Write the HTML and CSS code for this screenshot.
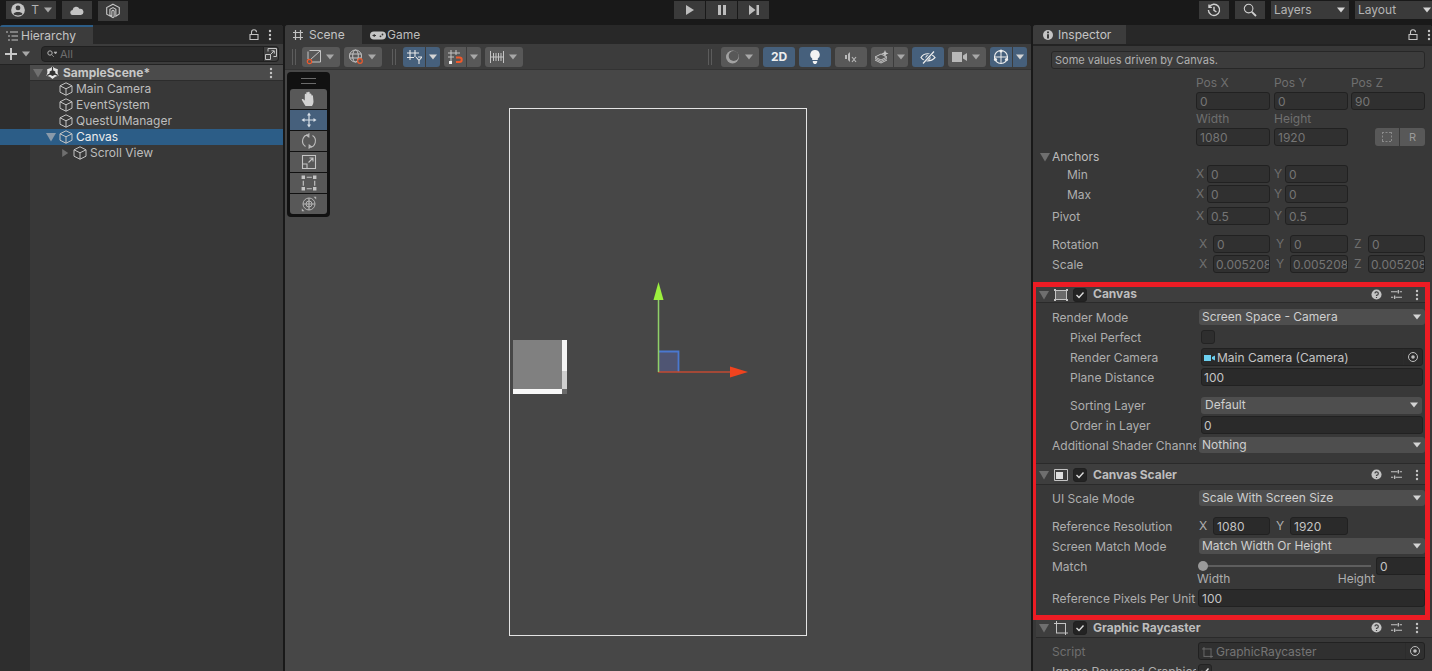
FILE: index.html
```html
<!DOCTYPE html>
<html lang="en">
<head>
<meta charset="utf-8">
<title>Unity Editor</title>
<link rel="stylesheet" href="styles.css">
</head>
<body>
<svg class="defs" width="0" height="0" aria-hidden="true">
  <symbol id="cube" viewBox="0 0 14 14"><path d="M7 .8 13 3.8V10.2L7 13.2 1 10.2V3.8ZM1 3.8 7 6.8 13 3.8M7 6.8V13.2" fill="none" stroke="currentColor" stroke-width="1"/></symbol>
  <symbol id="caret" viewBox="0 0 8 6"><path d="M0 .5H8L4 5.5Z" fill="currentColor"/></symbol>
  <symbol id="fold" viewBox="0 0 10 10"><path d="M0 1H10L5 9.5Z" fill="currentColor"/></symbol>
  <symbol id="dots" viewBox="0 0 4 12"><circle cx="2" cy="2" r="1.2" fill="currentColor"/><circle cx="2" cy="6" r="1.2" fill="currentColor"/><circle cx="2" cy="10" r="1.2" fill="currentColor"/></symbol>
  <symbol id="lock" viewBox="0 0 10 12"><path d="M2.5 5V3.2A2.5 2.5 0 0 1 7.5 3.2M1 5.5H9V10.5H1Z" fill="none" stroke="currentColor" stroke-width="1.1"/></symbol>
  <symbol id="help" viewBox="0 0 12 12"><circle cx="6" cy="6" r="5.5" fill="currentColor"/><path d="M4.2 4.8A1.9 1.9 0 1 1 6 7V7.6M6 8.6V9.8" fill="none" stroke="#3e3e3e" stroke-width="1.3"/></symbol>
  <symbol id="sliders" viewBox="0 0 12 12"><path d="M0 3H7M9.5 3H12M8 1V5M0 9H2.5M5 9H12M4 7V11" fill="none" stroke="currentColor" stroke-width="1.3"/></symbol>
  <symbol id="target" viewBox="0 0 12 12"><circle cx="6" cy="6" r="4.5" fill="none" stroke="currentColor"/><circle cx="6" cy="6" r="1.8" fill="currentColor"/></symbol>
  <symbol id="rect" viewBox="0 0 14 14"><path d="M5 2H9.500M5 12H9.500M2 5V9.500M12 5V9.500" fill="none" stroke="currentColor"/><path d="M.5 .5H3.500V3.500H.5ZM10.500 .5H13.500V3.500H10.500ZM.5 10.500H3.500V13.500H.5ZM10.500 10.500H13.500V13.500H10.500Z" fill="currentColor"/></symbol>
  <symbol id="ray" viewBox="0 0 14 14"><path d="M0 2.500H12M2 12H14M2.500 0V12M11.500 2V14" fill="none" stroke="currentColor"/></symbol>
</svg>

<header class="topbar">
  <div class="top-group">
    <div class="tb account">
      <svg class="i16" viewBox="0 0 14 14"><circle cx="7" cy="7" r="6" fill="#c4c4c4"/><circle cx="7" cy="5.2" r="2.1" fill="#3c3c3c"/><path d="M3 10.5C4 8.2 10 8.2 11 10.5 9.5 12.2 4.5 12.2 3 10.5Z" fill="#3c3c3c"/></svg>
      <span class="tb-text">T</span>
      <svg class="caret"><use href="#caret"/></svg>
    </div>
    <div class="tb cloud">
      <svg class="cloud-ico" viewBox="0 0 14 9"><path d="M3 9A2.5 2.5 0 0 1 2.6 4 3.6 3.6 0 0 1 9.4 2.8 3.1 3.1 0 0 1 11 9Z" fill="#c4c4c4"/></svg>
    </div>
    <div class="tb collab">
      <svg class="i16" viewBox="0 0 14 14"><path d="M7 1 12.5 4V9.5L9.500 11.500V5.500L7 4 4.300 5.500V10.500L6 11.500V7L7 6.300 8 7V12L7 12.800 1.500 9.800V4Z" fill="none" stroke="#c4c4c4"/></svg>
    </div>
  </div>
  <div class="play-group">
    <div class="pb"><svg viewBox="0 0 10 12" class="play-ico"><path d="M1 1 9 6 1 11Z" fill="#bdbdbd"/></svg></div>
    <div class="pb"><svg viewBox="0 0 10 12" class="play-ico"><path d="M1 1H4V11H1ZM6 1H9V11H6Z" fill="#bdbdbd"/></svg></div>
    <div class="pb"><svg viewBox="0 0 10 12" class="play-ico"><path d="M0 1 6.500 6 0 11ZM7.500 1H10V11H7.500Z" fill="#bdbdbd"/></svg></div>
  </div>
  <div class="top-group right">
    <div class="tb square">
      <svg class="i14" viewBox="0 0 14 14"><path d="M2.200 4A5.600 5.600 0 1 1 1.400 7M2 1.500V4.400H4.900M7 3.800V7.400L9.400 8.800" fill="none" stroke="#d0d0d0" stroke-width="1.400"/></svg>
    </div>
    <div class="tb square">
      <svg class="i14" viewBox="0 0 14 14"><circle cx="5.600" cy="5.600" r="4.300" fill="none" stroke="#d0d0d0" stroke-width="1.100"/><path d="M8.800 8.800 13 13" stroke="#d0d0d0" stroke-width="1.800"/></svg>
    </div>
    <div class="tb layers"><span>Layers</span><svg class="caret light"><use href="#caret"/></svg></div>
    <div class="tb layout"><span>Layout</span><svg class="caret light"><use href="#caret"/></svg></div>
  </div>
</header>

<main class="panels">
  <section class="panel hierarchy">
    <div class="tabbar">
      <div class="tab tab-hier accent">
        <svg class="i12" viewBox="0 0 12 12"><path d="M0 2H2M4 2H12M2 6H4M5.500 6H12M2 10H4M5.500 10H12" stroke="#c4c4c4" stroke-width="1"/></svg>
        <span>Hierarchy</span>
      </div>
      <div class="tab-actions">
        <svg class="lock"><use href="#lock"/></svg>
        <svg class="dots"><use href="#dots"/></svg>
      </div>
    </div>
    <div class="hier-tools">
      <span class="plus">
        <svg class="i12" viewBox="0 0 12 12"><path d="M6 0V12M0 6H12" stroke="#c8c8c8" stroke-width="2"/></svg>
        <svg class="caret plus-caret"><use href="#caret"/></svg>
      </span>
      <div class="search">
        <svg class="search-ico" viewBox="0 0 10 8"><circle cx="3" cy="3" r="2.200" fill="none" stroke="#b5b5b5"/><path d="M5 5 7 7M7 2H10L8.500 4Z" fill="#b5b5b5" stroke="#b5b5b5" stroke-width=".6"/></svg>
        <span class="search-text">All</span>
        <span class="search-btn">
          <svg class="i12" viewBox="0 0 12 12"><path d="M3 3.500V.5H11.500V8.500H8.500M.5 6.500H5.500V11.500H.5ZM5.500 6.500 9 3M6.500 2.800H9.300V5.600" fill="none" stroke="#c4c4c4"/></svg>
        </span>
      </div>
    </div>
    <div class="tree">
      <div class="tree-gutter"></div>
      <div class="tree-list">
        <div class="scene-row">
          <svg class="fold dim"><use href="#fold"/></svg>
          <svg class="unity-ico" viewBox="0 0 14 14"><path d="M7 0 9 2.200 12.800 3.500 12.500 7 13.500 10.500 10 11.500 7 14 4 11.500 .5 10.500 1.500 7 1.200 3.500 5 2.200Z" fill="#e6e6e6"/><path d="M7 4.200 10 5.900V9.200L7 10.900 4 9.200V5.900Z" fill="#333"/><path d="M7 .5V4.500M1.200 10.300 4.500 8.500M12.800 10.300 9.500 8.500" stroke="#333" stroke-width="1.300"/></svg>
          <span class="scene-name">SampleScene*</span>
          <svg class="dots scene-dots"><use href="#dots"/></svg>
        </div>
        <div class="tree-row lvl1"><svg class="cube"><use href="#cube"/></svg><span>Main Camera</span></div>
        <div class="tree-row lvl1"><svg class="cube"><use href="#cube"/></svg><span>EventSystem</span></div>
        <div class="tree-row lvl1"><svg class="cube"><use href="#cube"/></svg><span>QuestUIManager</span></div>
        <div class="tree-row lvl1 selected"><svg class="fold sel-fold"><use href="#fold"/></svg><svg class="cube"><use href="#cube"/></svg><span>Canvas</span></div>
        <div class="tree-row lvl2"><svg class="fold closed dim" viewBox="0 0 10 10"><path d="M1.500 0 9 5 1.500 10Z" fill="currentColor"/></svg><svg class="cube"><use href="#cube"/></svg><span>Scroll View</span></div>
      </div>
    </div>
  </section>

  <section class="panel scene">
    <div class="tabbar">
      <div class="tab tab-scene">
        <svg class="i12" viewBox="0 0 12 12"><path d="M3.500 1V11M8.500 1V11M1 3.500H11M1 8.500H11" fill="none" stroke="#c4c4c4" stroke-width="1.200"/></svg>
        <span>Scene</span>
      </div>
      <div class="tab-plain">
        <svg class="pad-ico" viewBox="0 0 16 9"><path d="M4 .5H12A3.800 3.800 0 0 1 12 8.500H4A3.800 3.800 0 0 1 4 .5Z" fill="#c4c4c4"/><path d="M2.500 4.500H6M4.200 3V6" stroke="#333"/><circle cx="10.500" cy="5.300" r=".9" fill="#333"/><circle cx="12.500" cy="3.500" r=".9" fill="#333"/></svg>
        <span>Game</span>
      </div>
    </div>
    <div class="scene-tools">
      <div class="grip"></div>
      <div class="sb w38">
        <svg class="i16" viewBox="0 0 16 16"><path d="M3.500 1.500H14.500V13H6M2 10V2.500M4 11 14 2" fill="none" stroke="#c4c4c4"/><circle cx="3.500" cy="12.500" r="2.200" fill="none" stroke="#f0592b" stroke-width="1.200"/></svg>
        <svg class="caret"><use href="#caret"/></svg>
      </div>
      <div class="sb w38">
        <svg class="i16" viewBox="0 0 16 16"><circle cx="7.500" cy="7" r="6" fill="none" stroke="#c4c4c4"/><ellipse cx="7.500" cy="7" rx="2.800" ry="6" fill="none" stroke="#c4c4c4"/><path d="M1.500 5H13.500M1.500 9H13.500" stroke="#c4c4c4"/><circle cx="12" cy="12" r="2.300" fill="#585858" stroke="#f0592b" stroke-width="1.200"/></svg>
        <svg class="caret"><use href="#caret"/></svg>
      </div>
      <div class="grip second"></div>
      <div class="split on">
        <span class="sp-main"><svg class="i16" viewBox="0 0 16 16"><path d="M4 1V11M9 1V8M1 4H13M1 8.500H8M12 8H16M10 8 13 11.500V15M16 8 13 11.500" fill="none" stroke="#e8e8e8" stroke-width="1.100"/></svg></span>
        <span class="sp-arrow"><svg class="caret"><use href="#caret"/></svg></span>
      </div>
      <div class="split">
        <span class="sp-main"><svg class="i16" viewBox="0 0 16 16"><path d="M4 1V12M9 1V6M1 4H13M1 8H7" fill="none" stroke="#c4c4c4"/><path d="M9 8.500H12.500A2 2 0 0 1 12.500 13H9" fill="none" stroke="#f0592b" stroke-width="2"/><path d="M2 12H5V15H2Z" fill="#eee"/></svg></span>
        <span class="sp-arrow"><svg class="caret"><use href="#caret"/></svg></span>
      </div>
      <div class="sb w38">
        <svg class="i16" viewBox="0 0 16 16"><path d="M1.500 2V14M14.500 2V14M1.500 8H14.500M4.500 4V12M7 4V12M9.500 4V12M12 4V12" fill="none" stroke="#c4c4c4"/></svg>
        <svg class="caret"><use href="#caret"/></svg>
      </div>
      <div class="spacer"></div>
      <div class="grip third"></div>
      <div class="sb w38">
        <svg class="i16" viewBox="0 0 16 16"><circle cx="7.500" cy="8" r="6.500" fill="#a2a2a2"/><circle cx="8.700" cy="7" r="5" fill="#585858"/></svg>
        <svg class="caret"><use href="#caret"/></svg>
      </div>
      <div class="sb w32 on"><span class="two-d">2D</span></div>
      <div class="sb w32 on"><svg class="i14" viewBox="0 0 14 14"><path d="M7 0A4.700 4.700 0 0 1 9.800 8.500V10H4.200V8.500A4.700 4.700 0 0 1 7 0ZM4.800 11H9.200V12.200L8 14H6L4.800 12.200Z" fill="#f2f2f2"/></svg></div>
      <div class="sb w32"><svg class="i14" viewBox="0 0 14 14"><path d="M1 5H3V9H1ZM4 4 6 2V12L4 10Z" fill="#b8b8b8"/><path d="M8 7 12 12M12 7 8 12" stroke="#b8b8b8" stroke-width="1.200"/></svg></div>
      <div class="split">
        <span class="sp-main"><svg class="i16" viewBox="0 0 16 16"><path d="M1 8 7 5 13 8 7 11ZM1 11 7 14 13 11M1 9.500 7 12.500 13 9.500" fill="none" stroke="#c4c4c4"/><path d="M11 1 12 3.500 14.500 4.500 12 5.500 11 8 10 5.500 7.500 4.500 10 3.500Z" fill="#c4c4c4"/></svg></span>
        <span class="sp-arrow"><svg class="caret"><use href="#caret"/></svg></span>
      </div>
      <div class="sb w32 on"><svg class="i16" viewBox="0 0 16 16"><path d="M1 8.500C4 3.500 11 3.500 15 8.500 11 13 4 13 1 8.500Z" fill="none" stroke="#eee" stroke-width="1.200"/><circle cx="8" cy="8.500" r="2.500" fill="#eee"/><path d="M2 15 14 2" stroke="#46607c" stroke-width="3"/><path d="M3 14.500 14 2.500" stroke="#eee" stroke-width="1.200"/></svg></div>
      <div class="sb w38"><svg class="cam-ico" viewBox="0 0 16 12"><path d="M0 1H10V11H0ZM11 4.500 15 2V10L11 7.500Z" fill="#b8b8b8"/></svg><svg class="caret"><use href="#caret"/></svg></div>
      <div class="split on last">
        <span class="sp-main"><svg class="i16" viewBox="0 0 16 16"><circle cx="8" cy="8" r="6.500" fill="none" stroke="#eee" stroke-width="1.200"/><path d="M1.500 8H14.500M8 1.500V14.500" stroke="#eee"/><circle cx="8" cy="2" r="1.600" fill="#eee"/><circle cx="2.500" cy="10.500" r="1.600" fill="#eee"/><circle cx="13.500" cy="10.500" r="1.600" fill="#eee"/></svg></span>
        <span class="sp-arrow"><svg class="caret"><use href="#caret"/></svg></span>
      </div>
    </div>
    <div class="viewport">
      <div class="tool-panel">
        <div class="tool-handle"></div>
        <div class="tool"><svg class="i16" viewBox="0 0 16 16"><path d="M4.500 15C3 12.500 1.500 10.500 .7 8.500 1.500 7.500 3 8.500 3.800 9.800V3.500C3.800 2.500 5.300 2.500 5.300 3.500V1.800C5.300 .7 7 .7 7 1.800V1.500C7 .6 8.700 .6 8.700 1.700V3C8.900 2.100 10.400 2.200 10.400 3.200V4.800C10.600 4 12 4.200 12 5.300L12.500 10.500C12.500 12.500 11.500 14 11 15Z" fill="#d2d2d2"/></svg></div>
        <div class="tool active"><svg class="i16" viewBox="0 0 16 16"><path d="M8 3V13M3 8H13" stroke="#d8e0e8" stroke-width="1.200"/><path d="M8 .5 10 3.500H6ZM8 15.500 10 12.500H6ZM.5 8 3.500 6V10ZM15.500 8 12.500 6V10Z" fill="#d8e0e8"/></svg></div>
        <div class="tool"><svg class="i16" viewBox="0 0 16 16"><path d="M4.500 13.500A6.500 6.500 0 0 1 7.500 1.600M11.500 2.500A6.500 6.500 0 0 1 8.500 14.400M8 .3 7.800 4 5 1.800M8 15.700 8.200 12 11 14.200" fill="none" stroke="#bcbcbc" stroke-width="1.100"/></svg></div>
        <div class="tool"><svg class="i16" viewBox="0 0 16 16"><path d="M1.500 1.500H14.500V14.500H1.500ZM1.500 10H6V14.500M7.500 8.500 12 4M8.500 4H12V7.500" fill="none" stroke="#c4c4c4" stroke-width="1.100"/></svg></div>
        <div class="tool"><svg class="i16 tool-rect"><use href="#rect"/></svg></div>
        <div class="tool"><svg class="i16" viewBox="0 0 16 16"><circle cx="8" cy="8" r="6" fill="none" stroke="#b4b4b4"/><path d="M8 2V14M2 8H14" stroke="#b4b4b4" stroke-width="1.200"/><ellipse cx="8" cy="8" rx="3" ry="3" fill="none" stroke="#b4b4b4"/><path d="M12.500 .8H15.200V3.500ZM3.500 15.200H.8V12.500Z" fill="#b4b4b4"/></svg></div>
      </div>
      <div class="canvas-rect"></div>
      <div class="ui-square">
        <div class="sq-vbar"><div class="sq-handle"></div></div>
        <div class="sq-hbar"></div>
      </div>
      <svg class="gizmo" viewBox="0 0 92 94">
        <rect x="2" y="71" width="21" height="20" fill="#4f5573"/>
        <path d="M2 70.500H22.500V91" fill="none" stroke="#4a78d0" stroke-width="1.800"/>
        <path d="M2 91H76" stroke="#c24a32" stroke-width="1.500"/>
        <path d="M2.500 91V16" stroke="#90d068" stroke-width="1.500"/>
        <path d="M2.500 1 7.500 19H-2.500Z" fill="#9cf03e"/>
        <path d="M74 85.500 92 91 74 96.500Z" fill="#f0431e"/>
      </svg>
    </div>
  </section>

  <section class="panel inspector">
    <div class="tabbar">
      <div class="tab tab-insp">
        <svg class="i12" viewBox="0 0 12 12"><circle cx="6" cy="6" r="5" fill="#c4c4c4"/><path d="M5 2.500H7V4.200H5ZM5 5.200H7V9.500H5Z" fill="#3c3c3c"/></svg>
        <span>Inspector</span>
      </div>
      <div class="tab-actions">
        <svg class="lock"><use href="#lock"/></svg>
        <svg class="dots"><use href="#dots"/></svg>
      </div>
    </div>
    <div class="insp-body">
      <div class="transform">
        <div class="driven">Some values driven by Canvas.</div>
        <div class="tri-grid heads"><span>Pos X</span><span>Pos Y</span><span>Pos Z</span></div>
        <div class="tri-grid"><span class="fld off">0</span><span class="fld off">0</span><span class="fld off">90</span></div>
        <div class="tri-grid heads second"><span>Width</span><span>Height</span><span></span></div>
        <div class="tri-grid"><span class="fld off">1080</span><span class="fld off">1920</span>
          <span class="rbtns"><span class="rb"><svg class="i10" viewBox="0 0 10 10"><path d="M0 .5H10M0 9.500H10M.5 0V10M9.500 0V10" fill="none" stroke="#8a8a8a" stroke-dasharray="2 1.500"/></svg></span><span class="rb rb-r">R</span></span>
        </div>
        <div class="prow anchors"><svg class="fold dim"><use href="#fold"/></svg><span>Anchors</span></div>
        <div class="prow r20 first-sub"><span class="lbl sub">Min</span><span class="xy"><i>X</i><span class="fld off">0</span><i>Y</i><span class="fld off">0</span></span></div>
        <div class="prow r20"><span class="lbl sub">Max</span><span class="xy"><i>X</i><span class="fld off">0</span><i>Y</i><span class="fld off">0</span></span></div>
        <div class="prow r20 pivot"><span class="lbl">Pivot</span><span class="xy"><i>X</i><span class="fld off">0.5</span><i>Y</i><span class="fld off">0.5</span></span></div>
        <div class="prow r20 rotation"><span class="lbl">Rotation</span><span class="xyz"><i>X</i><span class="fld off">0</span><i>Y</i><span class="fld off">0</span><i>Z</i><span class="fld off">0</span></span></div>
        <div class="prow r20"><span class="lbl">Scale</span><span class="xyz"><i>X</i><span class="fld off clip">0.005208</span><i>Y</i><span class="fld off clip">0.005208</span><i>Z</i><span class="fld off clip">0.005208</span></span></div>
      </div>

      <div class="highlight">
        <div class="comp-head first">
          <svg class="fold dim"><use href="#fold"/></svg>
          <svg class="comp-ico" viewBox="0 0 14 12"><path d="M1.500 1.500H12.500V10.500H1.500Z" fill="#6a6a6a" stroke="#c4c4c4"/><path d="M0 0H2V2H0ZM12 0H14V2H12ZM0 10H2V12H0ZM12 10H14V12H12Z" fill="#c4c4c4"/></svg>
          <span class="check"><svg viewBox="0 0 10 10"><path d="M1.500 5 4 7.500 8.500 2.500" fill="none" stroke="#ddd" stroke-width="1.400"/></svg></span>
          <b>Canvas</b>
          <span class="head-icons"><svg><use href="#help"/></svg><svg><use href="#sliders"/></svg><svg class="dots"><use href="#dots"/></svg></span>
        </div>
        <div class="comp-body canvas-body">
          <div class="prow r20"><span class="lbl">Render Mode</span><span class="drop">Screen Space - Camera<svg class="caret light"><use href="#caret"/></svg></span></div>
          <div class="prow r20"><span class="lbl nest">Pixel Perfect</span><span class="box"></span></div>
          <div class="prow r20"><span class="lbl nest">Render Camera</span><span class="fld objfield in"><svg class="cam-mini" viewBox="0 0 11 8"><path d="M0 1H7V7H0ZM8 3 11 1.500V6.500L8 5Z" fill="#6cd0f0"/></svg>Main Camera (Camera)<span class="picker"><svg><use href="#target"/></svg></span></span></div>
          <div class="prow r20"><span class="lbl nest">Plane Distance</span><span class="fld in">100</span></div>
          <div class="prow r20 spaced"><span class="lbl nest">Sorting Layer</span><span class="drop in">Default<svg class="caret light"><use href="#caret"/></svg></span></div>
          <div class="prow r20"><span class="lbl nest">Order in Layer</span><span class="fld in">0</span></div>
          <div class="prow r20"><span class="lbl">Additional Shader Channels</span><span class="drop">Nothing<svg class="caret light"><use href="#caret"/></svg></span></div>
        </div>
        <div class="comp-head tall">
          <svg class="fold dim"><use href="#fold"/></svg>
          <svg class="comp-ico" viewBox="0 0 14 12"><path d="M.5.5H13.500V11.500H.5Z" fill="none" stroke="#c4c4c4"/><path d="M2 3H9V10H2Z" fill="#e0e0e0"/></svg>
          <span class="check"><svg viewBox="0 0 10 10"><path d="M1.500 5 4 7.500 8.500 2.500" fill="none" stroke="#ddd" stroke-width="1.400"/></svg></span>
          <b>Canvas Scaler</b>
          <span class="head-icons"><svg><use href="#help"/></svg><svg><use href="#sliders"/></svg><svg class="dots"><use href="#dots"/></svg></span>
        </div>
        <div class="comp-body scaler-body">
          <div class="prow r20"><span class="lbl">UI Scale Mode</span><span class="drop">Scale With Screen Size<svg class="caret light"><use href="#caret"/></svg></span></div>
          <div class="prow r20 spaced"><span class="lbl">Reference Resolution</span><span class="xyz two"><i>X</i><span class="fld">1080</span><i>Y</i><span class="fld">1920</span></span></div>
          <div class="prow r20"><span class="lbl">Screen Match Mode</span><span class="drop">Match Width Or Height<svg class="caret light"><use href="#caret"/></svg></span></div>
          <div class="prow r20"><span class="lbl">Match</span><span class="slider"><span class="track"><span class="thumb"></span></span><span class="fld slider-val">0</span></span></div>
          <div class="slider-caps"><span>Width</span><span>Height</span></div>
          <div class="prow r20 ppu"><span class="lbl">Reference Pixels Per Unit</span><span class="fld full">100</span></div>
        </div>
      </div>

      <div class="raycaster">
        <div class="comp-head first ray-head">
          <svg class="fold dim"><use href="#fold"/></svg>
          <svg class="comp-ico ray-ico"><use href="#ray"/></svg>
          <span class="check"><svg viewBox="0 0 10 10"><path d="M1.500 5 4 7.500 8.500 2.500" fill="none" stroke="#ddd" stroke-width="1.400"/></svg></span>
          <b>Graphic Raycaster</b>
          <span class="head-icons"><svg><use href="#help"/></svg><svg><use href="#sliders"/></svg><svg class="dots"><use href="#dots"/></svg></span>
        </div>
        <div class="comp-body">
          <div class="prow r20 script"><span class="lbl off">Script</span><span class="fld full off objfield"><svg class="ray-mini"><use href="#ray"/></svg>GraphicRaycaster<span class="picker"><svg><use href="#target"/></svg></span></span></div>
          <div class="prow r20"><span class="lbl">Ignore Reversed Graphics</span><span class="box checked"><svg viewBox="0 0 10 10"><path d="M1.500 5 4 7.500 8.500 2.500" fill="none" stroke="#ddd" stroke-width="1.400"/></svg></span></div>
        </div>
      </div>
    </div>
  </section>
</main>
</body>
</html>
```
FILE: styles.css
```css
* { box-sizing: border-box; }
html, body { margin: 0; height: 100%; }
body {
  width: 1432px; height: 671px; overflow: hidden;
  background: #191919; color: #bdbdbd;
  font: 12px/16px Inter, "Liberation Sans", sans-serif;
  display: flex; flex-direction: column;
}
svg { display: block; flex: none; }
.defs { position: absolute; }
.i10 { width: 10px; height: 10px; }
.i12 { width: 12px; height: 12px; }
.i14 { width: 14px; height: 14px; }
.i16 { width: 16px; height: 16px; }
.caret { width: 8px; height: 6px; color: #a8a8a8; }
.caret.light { color: #d4d4d4; }
.fold { width: 10px; height: 10px; color: #c4c4c4; }
.fold.dim { color: #6f6f6f; }
.dots { width: 4px; height: 12px; color: #c4c4c4; }
.lock { width: 10px; height: 12px; color: #c4c4c4; }

/* top bar */
.topbar { height: 25px; flex: none; display: flex; justify-content: space-between; padding: 1px 0 0 6px; position: relative; }
.top-group { display: flex; gap: 6px; align-items: flex-start; }
.tb { height: 18px; background: #3a3a3a; display: flex; align-items: center; justify-content: center; }
.tb span { color: #b4b4b4; }
.account { width: 50px; padding: 0 4px; gap: 4px; justify-content: flex-start; }
.tb-text { width: 14px; text-align: center; color: #9a9a9a; }
.cloud { width: 30px; }
.cloud-ico { width: 14px; height: 9px; }
.collab { width: 30px; height: 20px; }
.square { width: 30px; }
.layers, .layout { justify-content: space-between; padding: 0 4px 0 3px; width: 78px; }
.layout { width: 77px; padding-right: 1px; }
.play-group { display: flex; gap: 1px; position: absolute; left: 674px; top: 1px; }
.pb { width: 31px; height: 18px; background: #3a3a3a; display: flex; align-items: center; justify-content: center; }
.play-ico { width: 10px; height: 12px; }

/* panels */
.panels { flex: 1; display: flex; gap: 2px; min-height: 0; }
.panel { display: flex; flex-direction: column; min-width: 0; background: #383838; border-radius: 3px 3px 0 0; overflow: hidden; }
.hierarchy { width: 283px; }
.scene { width: 746px; }
.inspector { flex: 1; }
.tabbar { height: 19px; flex: none; background: #282828; display: flex; align-items: stretch; position: relative; }
.tab { display: flex; align-items: center; gap: 3px; background: #3c3c3c; padding-left: 6px; color: #c4c4c4; font-size: 12px; }
.tab.accent { border-top: 2px solid #2c5d87; }
.tab-hier { width: 93px; }
.tab-scene { width: 77px; padding: 1px 0 0 7px; gap: 5px; }
.tab-insp { width: 93px; padding: 1px 0 0 9px; gap: 4px; }
.tab-plain { display: flex; align-items: center; gap: 1px; padding: 1px 0 0 8px; color: #bdbdbd; }
.pad-ico { width: 16px; height: 9px; }
.tab-actions { margin-left: auto; display: flex; align-items: center; gap: 9px; padding-right: 1px; }
.hierarchy .tab-actions { padding-right: 11px; }

/* hierarchy */
.hier-tools { height: 21px; flex: none; background: #3c3c3c; display: flex; align-items: center; padding: 0 4px 0 5px; border-bottom: 1px solid #232323; }
.plus { display: flex; align-items: center; gap: 5px; width: 36px; }
.plus-caret { color: #a8a8a8; }
.search { flex: 1; height: 16px; background: #2a2a2a; border: 1px solid #202020; border-radius: 4px; display: flex; align-items: center; padding-left: 5px; position: relative; }
.search-ico { width: 10px; height: 8px; }
.search-text { margin-left: 3px; color: #6e6e6e; font-size: 11px; }
.search-btn { margin-left: auto; width: 16px; height: 16px; margin-right: -1px; background: #3e3e3e; border: 1px solid #202020; border-radius: 0 4px 4px 0; display: flex; align-items: center; justify-content: center; }
.tree { flex: 1; display: flex; min-height: 0; }
.tree-gutter { width: 30px; background: #2e2e2e; }
.tree-list { flex: 1; background: #383838; }
.scene-row { height: 16px; background: #4b4b4b; display: flex; align-items: center; position: relative; border-bottom: 1px solid #2c2c2c; padding-left: 3px; }
.scene-row .fold { margin-right: 3px; }
.unity-ico { width: 13px; height: 13px; margin-right: 4px; }
.scene-name { font-weight: 700; color: #c8c8c8; }
.scene-dots { margin-left: auto; margin-right: 10px; }
.tree-row { height: 16px; display: flex; align-items: center; position: relative; color: #bdbdbd; }
.tree-row .cube { width: 14px; height: 14px; margin-right: 3px; color: #c4c4c4; }
.lvl1 { padding-left: 29px; }
.lvl2 { padding-left: 43px; }
.selected { background: #2c5d87; color: #ececec; margin-left: -30px; padding-left: 59px; }
.sel-fold { position: absolute; left: 46px; color: #8a9aaa; }
.closed { position: absolute; left: 31px; width: 8px; height: 10px; }

/* scene toolbar */
.scene-tools { height: 26px; flex: none; background: #3c3c3c; display: flex; align-items: center; padding: 1px 4px 0 7px; gap: 4px; border-bottom: 1px solid #333; }
.grip { width: 4px; height: 16px; border-left: 1px solid #5c5c5c; border-right: 1px solid #5c5c5c; margin-right: 2px; }
.grip.second { margin: 0 3px 0 6px; }
.grip.third { margin: 0 5px 0 0; }
.spacer { flex: 1; }
.sb { height: 20px; background: #585858; border-radius: 3px; display: flex; align-items: center; justify-content: center; }
.sb.on { background: #46607c; }
.w38 { width: 38px; justify-content: space-between; padding: 0 6px 0 4px; }
.w32 { width: 32px; }
.cam-ico { width: 16px; height: 12px; }
.two-d { font-weight: 700; color: #eee; font-size: 12px; }
.split { display: flex; gap: 1px; height: 20px; }
.sp-main { width: 22px; background: #585858; border-radius: 3px 0 0 3px; display: flex; align-items: center; justify-content: center; }
.sp-arrow { width: 14px; background: #585858; border-radius: 0 3px 3px 0; display: flex; align-items: center; justify-content: center; }
.split.on .sp-main, .split.on .sp-arrow { background: #46607c; }
.split.on .caret { color: #d4d4d4; }

/* viewport: free canvas */
.viewport { flex: 1; background: #474747; position: relative; overflow: hidden; }
.tool-panel { position: absolute; left: 2px; top: 2px; width: 43px; height: 145px; background: #111; border-radius: 4px; padding: 0 3px; display: flex; flex-direction: column; gap: 1px; }
.tool-handle { height: 16px; flex: none; position: relative; }
.tool-handle::after { content: ""; position: absolute; left: 11px; right: 11px; top: 6px; height: 4px; border-top: 1px solid #6a6a6a; border-bottom: 1px solid #6a6a6a; }
.tool { height: 20px; background: #585858; display: flex; align-items: center; justify-content: center; }
.tool:nth-child(2) { border-radius: 3px 3px 0 0; }
.tool:last-child { border-radius: 0 0 3px 3px; }
.tool.active { background: #46607c; }
.tool-rect { color: #c4c4c4; }
.canvas-rect { position: absolute; left: 224px; top: 38px; width: 298px; height: 528px; border: 1px solid #e4e4e4; }
.ui-square { position: absolute; left: 228px; top: 270px; width: 54px; height: 54px; background: #808080; }
.ui-square::after { content: ""; position: absolute; right: 0; bottom: 0; width: 5px; height: 5px; background: #6a6a6a; }
.sq-vbar { position: absolute; right: 0; top: 0; width: 5px; height: 49px; background: #f4f4f4; }
.sq-handle { position: absolute; left: 0; right: 0; bottom: 0; height: 18px; background: #cfcfcf; }
.sq-hbar { position: absolute; left: 0; bottom: 0; right: 5px; height: 5px; background: #f8f8f8; }
.gizmo { position: absolute; left: 371px; top: 211px; width: 92px; height: 94px; overflow: visible; }

/* inspector */
.insp-body { flex: 1; display: flex; flex-direction: column; min-height: 0; background: #383838; border-top: 2px solid #232323; overflow: hidden; }
.transform { height: 236px; flex: none; padding: 5px 7px 0 19px; color: #a8a8a8; }
.driven { height: 18px; margin-left: -1px; background: #3c3c3c; border: 1px solid #272727; border-radius: 3px; font-size: 11px; line-height: 16px; padding-left: 3px; color: #b0b0b0; }
.tri-grid { display: grid; grid-template-columns: 74px 74px 74px; column-gap: 4px; margin-left: 144px; height: 17px; }
.tri-grid > :nth-child(3) { margin: 0 1px 0 -1px; }
.heads { height: 23px; padding-top: 6px; color: #6f6f6f; line-height: 16px; }
.heads.second { height: 19px; padding-top: 2px; }
.fld { display: flex; align-items: center; height: 18px; background: #2a2a2a; border: 1px solid #212121; border-radius: 3px; padding: 2px 0 0 3px; color: #c4c4c4; overflow: hidden; white-space: nowrap; min-width: 0; position: relative; }
.fld.off { color: #757575; background: #303030; }
.fld.clip { padding-left: 2px; }
.rbtns { display: flex; justify-self: end; }
.rb { width: 25px; height: 18px; background: #585858; display: flex; align-items: center; justify-content: center; color: #9a9a9a; border-right: 1px solid #3a3a3a; font-size: 11px; }
.rb:first-child { border-radius: 3px 0 0 3px; }
.rb-r { border-radius: 0 3px 3px 0; border-right: 0; }
.prow { display: flex; align-items: center; height: 20px; }
.anchors { height: 17px; margin-top: 3px; gap: 2px; margin-left: -12px; color: #bdbdbd; }
.first-sub { margin-top: -1px; }
.pivot { margin-top: 2px; }
.rotation { margin-top: 8px; }
.lbl { width: 144px; flex: none; overflow: hidden; white-space: nowrap; color: #aeaeae; padding-top: 1px; }
.lbl.sub { padding-left: 15px; }
.lbl.nest { padding-left: 18px; }
.lbl.off { color: #6f6f6f; }
.xy { display: grid; grid-template-columns: 11px 63px 15px 63px; width: 152px; align-items: center; }
.xy i, .xyz i { font-style: normal; color: #6f6f6f; }
.xy .fld + i { padding-left: 4px; }
.xyz { display: grid; grid-template-columns: 14px 57px 20px 58px 20px 57px; width: 226px; margin-left: 3px; align-items: center; }
.xyz i:nth-child(3), .xyz i:nth-child(5) { padding-left: 6px; }
.xyz.two { width: auto; grid-template-columns: 14px 57px 20px 58px; }
.xyz.two i { color: #aeaeae; }

/* highlighted block */
.highlight { flex: none; margin-left: -2px; border: 5px solid #ed1c24; width: 399px; height: 338px; }
.highlight .comp-head.first b { margin-top: -1px; }
.comp-head { height: 16px; display: flex; align-items: center; background: #3e3e3e; border-bottom: 1px solid #2a2a2a; border-top: 1px solid #2a2a2a; padding-left: 3px; position: relative; }
.comp-head.first { border-top: 0; }
.comp-head.tall { height: 22px; padding-top: 1px; }
.comp-head.ray-head { height: 18px; padding-bottom: 2px; }
.comp-head .fold { margin-right: 5px; }
.comp-ico { width: 14px; height: 12px; margin-right: 5px; }
.ray-ico { color: #c4c4c4; height: 14px; }
.check { width: 14px; height: 14px; background: #232323; border: 1px solid #202020; border-radius: 3px; display: flex; align-items: center; justify-content: center; margin-right: 6px; }
.check svg { width: 10px; height: 10px; }
.comp-head b { font-weight: 700; color: #bdbdbd; font-size: 12px; }
.head-icons { margin-left: auto; display: flex; align-items: center; gap: 9px; padding-right: 6px; color: #c4c4c4; }
.head-icons svg { width: 11px; height: 11px; }
.head-icons svg.dots { width: 4px; height: 12px; margin-left: 4px; }
.comp-body { padding-left: 16px; }
.canvas-body { height: 160px; padding-top: 4px; }
.scaler-body { padding-top: 3px; }
.spaced { margin-top: 8px; }
.drop { flex: 1; margin-left: 3px; height: 16px; background: #4e4e4e; border-radius: 3px; display: flex; align-items: center; justify-content: space-between; padding: 0 4px 0 3px; color: #cfcfcf; min-width: 0; }
.drop.in { margin-left: 5px; margin-right: 3px; height: 17px; padding-left: 4px; }
.fld.in { flex: 1; margin-left: 5px; margin-right: 2px; padding-left: 2px; }
.box { width: 14px; height: 14px; margin-left: 5px; background: #2e2e2e; border: 1px solid #232323; border-radius: 3px; display: flex; align-items: center; justify-content: center; }
.box svg { width: 10px; height: 10px; }
.box.checked { margin-left: 2px; }
.objfield { padding-right: 0; }
.cam-mini { width: 11px; height: 8px; margin-right: 2px; }
.picker { position: absolute; right: 0; top: 0; bottom: 0; width: 19px; border-left: 1px solid #2c2c2c; display: flex; align-items: center; justify-content: center; color: #bdbdbd; }
.picker svg { width: 12px; height: 12px; }
.slider { flex: 1; display: flex; align-items: center; margin-left: 3px; }
.track { width: 172px; height: 2px; background: #5e5e5e; position: relative; flex: none; margin-right: 5px; }
.thumb { position: absolute; left: -1px; top: -4px; width: 10px; height: 10px; border-radius: 50%; background: #9a9a9a; }
.slider-val { flex: 1; border-right: 0; border-radius: 3px 0 0 3px; }
.slider-caps { display: flex; justify-content: space-between; margin-left: 145px; width: 178px; height: 12px; line-height: 12px; color: #aeaeae; margin-top: -3px; white-space: nowrap; }
.ppu { margin-top: 3px; }
.fld.full { flex: 1; margin-left: 2px; }
.ray-mini { width: 11px; height: 11px; margin-right: 3px; color: #777; }

/* raycaster */
.raycaster { flex: none; padding: 0 7px 0 3px; }
.raycaster .comp-head { margin-right: -7px; padding-right: 7px; }
.script { margin-top: 3px; }
```
